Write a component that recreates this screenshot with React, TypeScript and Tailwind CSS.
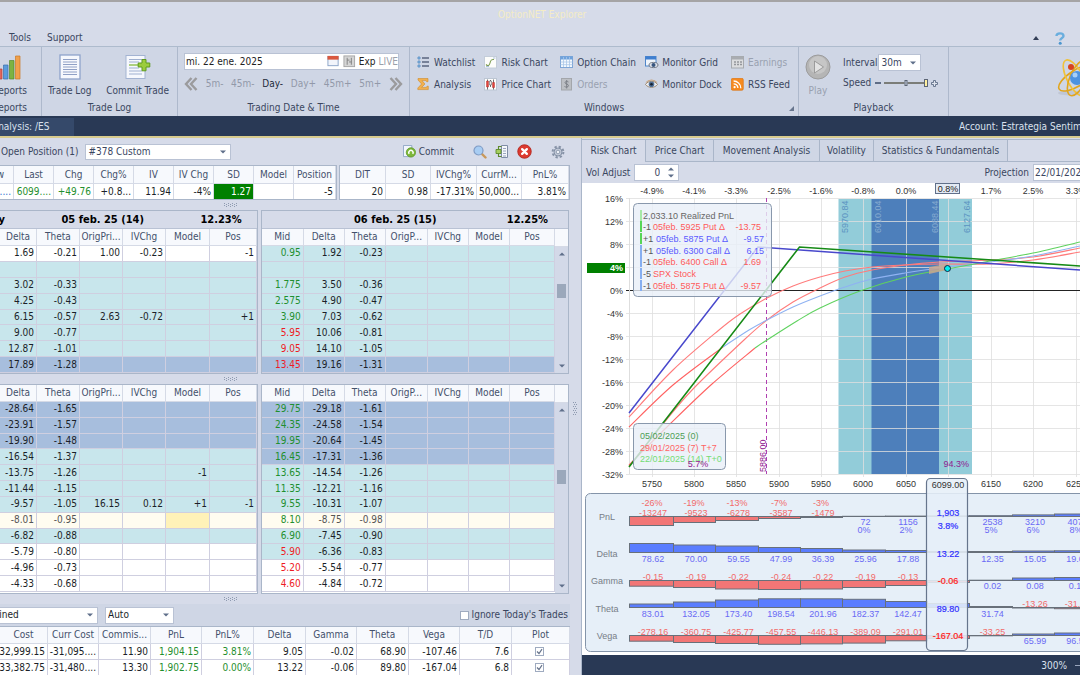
import React, { useState } from "react";

type Row = string[];

interface Column {
  label: string;
  width: number;
}

const cols = (spec: string): Column[] =>
  spec.split("|").map((part) => {
    const [label, width] = part.split(":");
    return { label, width: Number(width) };
  });

const rows = (text: string): Row[] => text.split("\n").map((line) => line.split("|"));

const quoteCols = cols("Low:14|Last:40|Chg:40|Chg%:40|IV:40|IV Chg:40|SD:40|Model:40|Position:42");
const tradeCols = cols("DIT:46|SD:45|IVChg%:46|CurrM...:45|PnL%:47");
const frontCols = cols("Delta:37|Theta:43|OrigPri...:43|IVChg:43|Model:44|Pos:47");
const backCols = cols("Mid:42|Delta:41|Theta:41|OrigP...:42|IVChg:41|Model:41|Pos:45");
const costCols = cols("Cost:48|Curr Cost:51|Commis...:52|PnL:51|PnL%:52|Delta:52|Gamma:51|Theta:52|Vega:51|T/D:52|Plot:58");

const frontCalls = rows("1.69|-0.21|1.00|-0.23||-1\n|||||\n3.02|-0.33||||\n4.25|-0.43||||\n6.15|-0.57|2.63|-0.72||+1\n9.00|-0.77||||\n12.87|-1.01||||\n17.89|-1.28||||");
const backCalls = rows("0.95|1.92|-0.23||||\n||||||\n1.775|3.50|-0.36||||\n2.575|4.90|-0.47||||\n3.90|7.03|-0.62||||\n5.95|10.06|-0.81||||\n9.05|14.10|-1.05||||\n13.45|19.16|-1.31||||");
const frontPuts = rows("-28.64|-1.65||||\n-23.91|-1.57||||\n-19.90|-1.48||||\n-16.54|-1.37||||\n-13.75|-1.26|||-1|\n-11.44|-1.15||||\n-9.57|-1.05|16.15|0.12|+1|-1\n-8.01|-0.95||||\n-6.82|-0.88||||\n-5.79|-0.80||||\n-4.96|-0.73||||\n-4.33|-0.68||||");
const backPuts = rows("29.75|-29.18|-1.61||||\n24.35|-24.58|-1.54||||\n19.95|-20.64|-1.45||||\n16.45|-17.31|-1.36||||\n13.65|-14.54|-1.26||||\n11.35|-12.21|-1.16||||\n9.55|-10.31|-1.07||||\n8.10|-8.75|-0.98||||\n6.90|-7.45|-0.90||||\n5.90|-6.36|-0.83||||\n5.20|-5.54|-0.77||||\n4.60|-4.84|-0.72||||");
const costs = rows("-32,999.15|-31,095....|11.90|1,904.15|3.81%|9.05|-0.02|68.90|-107.46|7.6\n-33,382.75|-31,480....|13.30|1,902.75|0.00%|13.22|-0.06|89.80|-167.04|6.8");

// w = white, c = within two deviations, b = within one, y = focused row
const toneClass: Record<string, string> = {
  w: "bg-white",
  c: "bg-[#c8e6ec]",
  b: "bg-[#a7bedd]",
  y: "bg-[#fffcf0] text-[#555]",
};

const headCell = "overflow-hidden whitespace-nowrap border-r border-b border-[#d5dae6] p-0 text-center font-normal text-[#43506b]";
const bodyCell = "overflow-hidden whitespace-nowrap border-r border-b border-[#cfcfe0] p-0 pr-[2px] text-right leading-[14px]";

function Cols({ columns }: { columns: Column[] }) {
  return (
    <colgroup>
      {columns.map((c, i) => (
        <col key={i} style={{ width: c.width }} />
      ))}
    </colgroup>
  );
}

interface ChainProps {
  columns: Column[];
  data: Row[];
  tones: string;
  redFrom?: number;
  height: string;
  focus?: boolean;
}

function ChainTable({ columns, data, tones, redFrom, height, focus }: ChainProps) {
  return (
    <table className={`w-full table-fixed border-separate border-spacing-0 ${height}`}>
      <Cols columns={columns} />
      <thead className="bg-[#f7f9fd]">
        <tr className="h-[17px]">
          {columns.map((c) => (
            <th key={c.label} className={headCell}>{c.label}</th>
          ))}
        </tr>
      </thead>
      <tbody>
        {data.map((row, r) => (
          <tr key={r} className={`h-[15px] ${toneClass[tones[r]]}`}>
            {row.map((cell, i) => {
              let color = "";
              if (redFrom !== undefined && i === 0) color = r >= redFrom ? "text-[#ee1c25]" : "text-[#1f8f2e]";
              if (focus && tones[r] === "y" && i === 4) color = "bg-[#fff2b8]";
              return (
                <td key={i} className={`${bodyCell} ${color}`}>{cell}</td>
              );
            })}
          </tr>
        ))}
      </tbody>
    </table>
  );
}

function ScrollBar({ thumb }: { thumb: string }) {
  return (
    <div className="flex w-[13px] shrink-0 flex-col bg-[#d3d9e8]">
      <div className="h-[18px] border-b border-[#d5dae6] bg-[#f7f9fd]" />
      <div className="flex flex-1 flex-col items-center py-[5px]">
        <Caret up />
        <div className={`h-[14px] w-[9px] bg-[#9ba8bb] ${thumb}`} />
        <div className="mt-auto">
          <Caret />
        </div>
      </div>
    </div>
  );
}

function Caret({ up = false }: { up?: boolean }) {
  return (
    <svg width="6" height="4" viewBox="0 0 6 4" className="block">
      <path d={up ? "M0 3.5 3 .5 6 3.5z" : "M0 .5h6L3 3.5z"} fill="#5f6f8a" />
    </svg>
  );
}

function Grip({ vertical = false }: { vertical?: boolean }) {
  return (
    <svg width={vertical ? 5 : 13} height={vertical ? 13 : 5} className="block">
      {[0, 2, 4, 6, 8, 10, 12].map((a) =>
        [0, 1].map((k) => {
          const b = k * 2 + (a % 4 ? 1 : 0);
          return <rect key={`${a}-${k}`} x={vertical ? b : a} y={vertical ? a : b} width="1" height="1" fill="#8e9ab0" />;
        })
      )}
    </svg>
  );
}

function HSplitter() {
  return (
    <div className="flex h-[10px] items-center pl-[224px]">
      <Grip />
    </div>
  );
}

interface PickerProps {
  label: string;
  value: string;
  className: string;
}

function Picker({ label, value, className }: PickerProps) {
  return (
    <div className={`relative flex items-center border border-[#b9c2d4] bg-white ${className}`}>
      <select aria-label={label} defaultValue={value} className="h-full w-full appearance-none bg-transparent pl-[2px] outline-none">
        <option>{value}</option>
      </select>
      <span className="pointer-events-none absolute right-[4px]">
        <Caret />
      </span>
    </div>
  );
}

/* ---------- icons ---------- */

const iconArt: Record<string, React.ReactNode> = {
  watch: (
    <>
      {[2, 6, 10].map((y) => (
        <g key={y}>
          <circle cx="2" cy={y} r="1.3" fill="#7fb2e0" stroke="#4a7fb5" strokeWidth=".5" />
          <path d={`M5 ${y}h7`} stroke="#3c4963" strokeWidth="1.2" />
        </g>
      ))}
    </>
  ),
  sigma: <path d="M1 .5h10v3.2H9.6L9 2.6H5L8 6l-3.3 3.4H9.4l.6-1.2h1.3v3.4H.8V10L4.6 6 1 2z" fill="#f2b04e" stroke="#cf8b2b" strokeWidth=".6" />,
  risk: (
    <>
      <rect x=".5" y=".5" width="12" height="11.5" fill="#fdfdfb" stroke="#c4cdd9" />
      <path d="M2 8.5c2 2 3.5 1 4-1.5S7 3 10 3.5" fill="none" stroke="#7d9c52" strokeWidth="1.1" />
      <path d="M9 2h2.5M2 10.5h3" stroke="#a9bfdc" />
    </>
  ),
  price: (
    <>
      <rect x=".5" y=".5" width="12" height="11.5" fill="#fdfdfd" stroke="#bcc6d3" />
      <path d="M3.5 1.5v10M6.5 2v7M9.5 1.5v10" stroke="#333" strokeWidth=".7" />
      <path d="M2.5 3h2v6h-2zM8.5 4.5h2v5h-2z" fill="#e2453c" stroke="#a22" strokeWidth=".4" />
      <path d="M5.6 3h1.8v4H5.6z" fill="#fff" stroke="#333" strokeWidth=".5" />
    </>
  ),
  chain: (
    <>
      <rect x=".5" y=".5" width="12" height="11" fill="#f4f9fe" stroke="#7fa6d6" />
      <path d="M.5.5h12v3H.5z" fill="#6fa2dc" />
      <path d="M.5 6h12M.5 8.7h12M3.5 1v10M6.5 1v10M9.5 1v10" stroke="#a9c6e8" strokeWidth=".8" />
    </>
  ),
  orders: (
    <>
      <rect x="1.5" y=".5" width="10" height="11.5" fill="#bcbfc4" stroke="#a3a6ab" />
      <path d="M8.5 4C7.5 3 4.8 3.2 5 4.8s3.5 1 3.5 2.8S5.5 9.3 4.5 8.5M6.7 2v8.5" fill="none" stroke="#7d8188" />
    </>
  ),
  grid: (
    <>
      <rect x=".5" y=".5" width="10.5" height="9.5" fill="#eef4fb" stroke="#4f86c9" />
      <path d="M.5.5H11v3H.5z" fill="#3f7fd0" />
      <ellipse cx="8.5" cy="9" rx="4.5" ry="2.6" fill="#dfe3ea" stroke="#5a6270" strokeWidth=".8" />
      <circle cx="8.5" cy="9" r="2" fill="#38567f" />
    </>
  ),
  dock: (
    <>
      <path d="M.5 6.5C3 2.5 9.5 2 12.5 6.5 9.5 10.3 3.5 10.3.5 6.5z" fill="#eef0f4" stroke="#8b7355" strokeWidth=".8" />
      <path d="M1 4.5C4 1.2 9 1.2 12 4.5" fill="none" stroke="#c8a37b" strokeWidth="1.1" />
      <circle cx="6.5" cy="6.2" r="2.8" fill="#4f6f96" />
      <circle cx="6.5" cy="6.2" r="1.3" fill="#16202e" />
    </>
  ),
  earn: (
    <>
      <rect x=".5" y=".5" width="12" height="11.5" fill="#dcdddf" stroke="#a6a9ae" />
      <path d="M.5.5h12v3H.5z" fill="#a9acb1" />
      <path d="M3 6h2m1 0h2m1 0h2M3 8.5h2m1 0h2m1 0h2" stroke="#94979c" strokeWidth="1.3" />
    </>
  ),
  rss: (
    <>
      <rect x=".3" y=".3" width="12" height="12" rx="1.5" fill="#f68a1f" stroke="#d96f0a" strokeWidth=".6" />
      <circle cx="3.6" cy="9.2" r="1.1" fill="#fff" />
      <path d="M2.6 5.8a4.3 4.3 0 0 1 4.3 4.3M2.6 3a7.2 7.2 0 0 1 7.2 7.2" fill="none" stroke="#fff" strokeWidth="1.3" />
    </>
  ),
  calendar: (
    <>
      <rect x="1" y="1.5" width="11" height="10" fill="#f2f5fb" stroke="#8aa3c7" />
      <path d="M.5 1h12v4H.5z" fill="#d9583f" />
    </>
  ),
  levels: (
    <>
      <rect x="1" y="1" width="11.5" height="11.5" fill="#d5d5d5" stroke="#a5a5a5" />
      <path d="M4.5 3v7.5M9 3v7.5M4.5 5.5H7M6.5 7.5H9" stroke="#777" strokeWidth=".9" />
    </>
  ),
  commit: (
    <>
      <path d="M.5.5h9v12h-9z" fill="#f2f6fc" stroke="#8ea4c4" />
      <circle cx="8.5" cy="8" r="5" fill="#7db83a" stroke="#5a9423" strokeWidth=".8" />
      <path d="M6.8 9.5a2.3 2.3 0 1 1 3.5 0" fill="none" stroke="#fff" strokeWidth="1.5" />
    </>
  ),
  search: (
    <>
      <path d="M8.5 8.5l4 4" stroke="#c9985a" strokeWidth="2.4" strokeLinecap="round" />
      <circle cx="5.5" cy="5.5" r="4.5" fill="#a8cdf3" stroke="#7f9bc4" strokeWidth="1.2" />
    </>
  ),
  book: (
    <>
      <path d="M6.5.5h6v12h-6z" fill="#f5f7fb" stroke="#7f8da6" />
      <path d="M8 3.5h3M8 6h3M8 8.5h3M8 11h3" stroke="#9aa7bd" />
      <path d="M6.5 1.5h-3v10h3" fill="none" stroke="#5d8a2b" strokeWidth="1.1" />
      <path d="M1 4.5h5v4H1z" fill="#a6cf5f" stroke="#5d8a2b" strokeWidth=".9" />
    </>
  ),
  close: (
    <>
      <circle cx="7" cy="7" r="6.3" fill="#dc3a30" stroke="#b3241b" strokeWidth=".8" />
      <path d="M4.8 4.8l4.4 4.4M9.2 4.8 4.8 9.2" stroke="#fff" strokeWidth="2.2" strokeLinecap="round" />
    </>
  ),
  gear: (
    <>
      <circle cx="7" cy="7" r="5.4" fill="none" stroke="#8692a6" strokeWidth="2" strokeDasharray="2.3 1.94" />
      <circle cx="7" cy="7" r="4" fill="#c3cad8" stroke="#8390a5" />
      <circle cx="7" cy="7" r="1.8" fill="#eef1f7" stroke="#8390a5" strokeWidth=".8" />
    </>
  ),
};

function Icon({ name, className = "size-[13px]" }: { name: string; className?: string }) {
  return (
    <svg viewBox="0 0 14 14" className={`shrink-0 ${className}`} aria-hidden="true">
      {iconArt[name]}
    </svg>
  );
}

/* ---------- ribbon ---------- */

function Group({ title, className, children }: { title: string; className: string; children: React.ReactNode }) {
  return (
    <section className={`flex shrink-0 flex-col border-r border-[#aeb9cc] ${className}`}>
      <div className="flex-1">{children}</div>
      <h2 className="h-[16px] text-center leading-[16px]">{title}</h2>
    </section>
  );
}

const windowItems: [string, string, boolean][][] = [
  [["watch", "Watchlist", true], ["sigma", "Analysis", true]],
  [["risk", "Risk Chart", true], ["price", "Price Chart", true]],
  [["chain", "Option Chain", true], ["orders", "Orders", false]],
  [["grid", "Monitor Grid", true], ["dock", "Monitor Dock", true]],
  [["earn", "Earnings", false], ["rss", "RSS Feed", true]],
];

function Chevrons({ flip = false }: { flip?: boolean }) {
  return (
    <svg width="14" height="14" viewBox="0 0 14 14" className={flip ? "rotate-180" : ""}>
      <path d="M7.5 1 2 7l5.5 6M12.5 1 7 7l5.5 6" fill="none" stroke="#9b9b9d" strokeWidth="2.4" />
    </svg>
  );
}

function Ribbon() {
  return (
    <div className="flex h-[70px] overflow-hidden border-t border-[#aebbcd] bg-[#cfd6e5] text-[#3a465f]">
      <section className="flex w-[42px] shrink-0 flex-col items-end overflow-hidden border-r border-[#aeb9cc] pr-[14px]">
        <button className="flex flex-1 flex-col items-end pt-[7px]">
          <svg width="26" height="26" viewBox="0 0 26 26" className="mr-[6px]">
            <path d="M2 15h5v10H2z" fill="#e2665c" stroke="#b0413a" strokeWidth=".7" />
            <path d="M8.5 11H13v14H8.5z" fill="#5b9bdc" stroke="#3a70ab" strokeWidth=".7" />
            <path d="M14.5 6.5H19V25h-4.5z" fill="#7cb342" stroke="#558b2f" strokeWidth=".7" />
            <path d="M20.5 2H25v23h-4.500z" fill="#f0a04b" stroke="#c87a26" strokeWidth=".7" />
          </svg>
          <span className="mt-[4px] leading-[14px]">Reports</span>
        </button>
        <h2 className="h-[16px] leading-[16px]">Reports</h2>
      </section>

      <Group title="Trade Log" className="w-[136px]">
        <div className="flex justify-between pt-[7px] pr-[8px] pl-[6px]">
          <button className="flex flex-col items-center">
            <svg width="22" height="26" viewBox="0 0 22 26">
              <rect x="1" y="1" width="20" height="24" fill="#f6f8fd" stroke="#8fa3cb" strokeWidth="1.3" />
              <path d="M4 5.5h14M4 8h14M4 10.5h14M4 13h14M4 15.5h14M4 18h14M4 20.5h14" stroke="#8fa0c6" />
            </svg>
            <span className="mt-[4px] leading-[14px]">Trade Log</span>
          </button>
          <button className="flex flex-col items-center">
            <svg width="26" height="26" viewBox="0 0 26 26">
              <rect x="1" y="1.5" width="19" height="23" fill="#f6f8fd" stroke="#a3b3d2" />
              <path d="M4 5.5h13M4 8h10M4 14h10M4 17h13M4 20h13" stroke="#9fb0d0" />
              <path d="M4 11h12" stroke="#7cb52c" strokeWidth="1.2" />
              <path d="M17 5.5h4V9h3.8v4H21v3.8h-4V13h-3.8V9H17z" fill="#9ccc3c" stroke="#5f9a1f" />
            </svg>
            <span className="mt-[4px] leading-[14px]">Commit Trade</span>
          </button>
        </div>
      </Group>

      <Group title="Trading Date & Time" className="w-[232px]">
        <div className="mt-[6px] mr-[10px] ml-[6px] flex h-[17px] items-center gap-[3px] border border-[#b9c2d4] bg-white pl-[1px]">
          <input aria-label="Trading date" defaultValue="mi. 22 ene. 2025" className="min-w-0 flex-1 text-[#222] outline-none" />
          <Icon name="calendar" />
          <Icon name="levels" />
          <span className="text-[#222]">Exp</span>
          <span className="text-[#9aa0aa]">LIVE</span>
        </div>
        <div className="mx-[6px] mt-[7px] flex items-center justify-between text-[#9299a9]">
          <button aria-label="Back"><Chevrons /></button>
          <button>5m-</button>
          <button>45m-</button>
          <button className="text-[#222a3a]">Day-</button>
          <button>Day+</button>
          <button>45m+</button>
          <button>5m+</button>
          <button aria-label="Forward"><Chevrons flip /></button>
        </div>
      </Group>

      <Group title="Windows" className="relative w-[389px]">
        <div className="flex justify-between pt-[7px] pr-[8px] pl-[7px]">
          {windowItems.map((pair, i) => (
            <div key={i} className="flex flex-col gap-[4px]">
              {pair.map(([icon, text, on]) => (
                <button key={text} disabled={!on} className={`flex h-[18px] items-center gap-[3px] ${on ? "" : "text-[#99a1b0]"}`}>
                  <Icon name={icon} className="size-[14px]" />
                  {text}
                </button>
              ))}
            </div>
          ))}
        </div>
        <svg width="5" height="5" className="absolute right-[4px] bottom-[5px]"><path d="M5 0v5H0z" fill="#67758d" /></svg>
      </Group>

      <Group title="Playback" className="w-[150px]">
        <div className="flex pt-[7px] pl-[6px]">
          <button disabled className="flex flex-col items-center text-[#99a1b0]">
            <svg width="26" height="26" viewBox="0 0 26 26">
              <circle cx="13" cy="13" r="12" fill="#b5b5b5" stroke="#9c9c9c" />
              <circle cx="13" cy="11" r="9" fill="#c6c6c6" />
              <path d="M9.5 7v12l9-6z" fill="#e3e3e3" stroke="#8d8d8d" strokeWidth=".8" />
            </svg>
            <span className="mt-[4px] leading-[14px]">Play</span>
          </button>
          <div className="flex flex-col gap-[5px] pl-[12px]">
            <div className="flex items-center">
              <span>Interval</span>
              <Picker label="Interval" value="30m" className="ml-[1px] h-[17px] w-[43px]" />
            </div>
            <label className="flex items-center gap-[3px]">
              Speed
              <span className="ml-[1px] h-[2px] w-[6px] bg-[#5f6d86]" />
              <span className="relative flex items-center">
                <input
                  type="range"
                  defaultValue={100}
                  className="h-[8px] w-[44px] appearance-none bg-[linear-gradient(#7b7d78,#7b7d78)] bg-[length:100%_2px] bg-center bg-no-repeat [&::-webkit-slider-thumb]:h-[8px] [&::-webkit-slider-thumb]:w-[4px] [&::-webkit-slider-thumb]:appearance-none [&::-webkit-slider-thumb]:border [&::-webkit-slider-thumb]:border-[#5d6675] [&::-webkit-slider-thumb]:bg-[#fff0a0]"
                />
                <span className="pointer-events-none absolute left-1/2 h-[6px] w-[3px] -translate-x-1/2 border border-[#5d6675] bg-[#cfd6e5]" />
              </span>
              <svg width="7" height="7"><path d="M2.5.5h2v2h2v2h-2v2h-2v-2h-2v-2h2z" fill="#dfe4ee" stroke="#5f6d86" strokeWidth=".9" /></svg>
            </label>
          </div>
        </div>
      </Group>

      <div className="flex flex-1 items-start justify-end overflow-hidden pt-[9px]">
        <svg width="26" height="46" viewBox="0 0 26 46">
          <ellipse cx="18" cy="37" rx="14" ry="2.5" fill="#b9c0cf" opacity=".7" />
          <g fill="none" stroke="#e2a51c" strokeWidth="1.6">
            <ellipse cx="23" cy="22" rx="21" ry="8" transform="rotate(-32 23 22)" />
            <ellipse cx="21" cy="22" rx="8" ry="20" transform="rotate(-28 21 22)" stroke="#f0c23a" />
            <ellipse cx="24" cy="22" rx="8" ry="19" transform="rotate(24 24 22)" />
          </g>
          <circle cx="23" cy="22" r="7" fill="#4d93e0" />
          <circle cx="21" cy="19" r="2.5" fill="#a8d0f7" />
          <circle cx="17" cy="11" r="3" fill="#d8431e" />
        </svg>
      </div>
    </div>
  );
}

/* ---------- risk chart ---------- */

// Catmull-Rom spline through the given points
function smooth(points: number[][]): string {
  let d = `M${points[0][0]} ${points[0][1]}`;
  for (let i = 0; i < points.length - 1; i++) {
    const p0 = points[i - 1] || points[i];
    const p1 = points[i];
    const p2 = points[i + 1];
    const p3 = points[i + 2] || p2;
    d += `C${p1[0] + (p2[0] - p0[0]) / 6} ${p1[1] + (p2[1] - p0[1]) / 6} ${p2[0] - (p3[0] - p1[0]) / 6} ${p2[1] - (p3[1] - p1[1]) / 6} ${p2[0]} ${p2[1]}`;
  }
  return d;
}

const priceTicks: [number, string, string][] = [
  [652, "-4.9%", "5750"],
  [694, "-4.1%", "5800"],
  [736, "-3.3%", "5850"],
  [779, "-2.5%", "5900"],
  [821, "-1.6%", "5950"],
  [863, "-0.8%", "6000"],
  [906, "0.0%", "6050"],
  [948, "", ""],
  [991, "1.7%", "6150"],
  [1033, "2.5%", "6200"],
  [1076, "3.3%", "6250"],
];

const legs: [string, string, string, string, string, number][] = [
  ["", "2,033.10 Realized PnL", "", "#666", "#a6e8a6", 219],
  ["-1", "05feb. 5925 Put Δ", "-13.75", "#ff5a5a", "#56d656", 230],
  ["+1", "05feb. 5875 Put Δ", "-9.57", "#5a5aff", "#56d656", 242],
  ["+1", "05feb. 6300 Call Δ", "6.15", "#5a5aff", "#86aef0", 254],
  ["-1", "05feb. 6400 Call Δ", "1.69", "#ff5a5a", "#86aef0", 265],
  ["-5", "SPX Stock", "", "#ff5a5a", "#86aef0", 277],
  ["-1", "05feb. 5875 Put Δ", "-9.57", "#ff5a5a", "#86aef0", 289],
];

const edges = [629, 673, 715, 758, 800, 842, 885, 927, 969, 1012, 1054, 1097];

interface Greek {
  name: string;
  label: number;
  base: number;
  bars: number[];
  values: string[];
  neg: number;
  pos: number;
}

const greeks: Greek[] = [
  { name: "PnL", label: 520, base: 516.5, bars: [-9, -6, -4, -2, -1, 0.2, 0.4, 0.6, 0.8, 1.6, 2.5], values: ["-13247", "-9523", "-6278", "-3587", "-1479", "72", "1156", "", "2538", "3210", "4075"], neg: 516, pos: 525 },
  { name: "Delta", label: 557, base: 552.5, bars: [9, 7.5, 6.5, 5, 4, 2.5, 2, 1, 1, 1.5, 1.7], values: ["78.62", "70.00", "59.55", "47.99", "36.39", "25.96", "17.88", "", "12.35", "15.05", "19.65"], neg: 549, pos: 562 },
  { name: "Gamma", label: 584, base: 580.5, bars: [-5.7, -7, -8.5, -9, -8.5, -7, -5, -2, 0.3, 2.5, 3], values: ["-0.15", "-0.19", "-0.22", "-0.24", "-0.22", "-0.19", "-0.13", "", "0.02", "0.08", "0.12"], neg: 580, pos: 589 },
  { name: "Theta", label: 612, base: 607.5, bars: [3.5, 5.5, 7.5, 8.7, 8.7, 8.2, 6, 4, 1, -0.5, -1.2], values: ["83.01", "132.05", "173.40", "198.54", "201.96", "182.37", "142.47", "", "31.74", "-13.26", "-31.08"], neg: 607, pos: 617 },
  { name: "Vega", label: 639, base: 635.5, bars: [-5.7, -7, -8, -8.8, -8.4, -7.6, -5.3, -3, -0.3, 1.5, 2.5], values: ["-278.16", "-360.75", "-425.77", "-457.55", "-446.13", "-389.09", "-291.01", "", "-33.25", "65.99", "96.55"], neg: 635, pos: 644 },
];

const pnlPct: [number, string, number][] = [
  [652, "-26%", 506], [694, "-19%", 506], [737, "-13%", 506], [779, "-7%", 506], [821, "-3%", 506],
  [864, "0%", 533], [906, "2%", 533], [991, "5%", 533], [1033, "6%", 533], [1076, "8%", 533],
];

const current: [string, number][] = [["1,903", 516], ["3.8%", 529], ["13.22", 557], ["-0.06", 584], ["89.80", 612], ["-167.04", 639]];

const RED = "#f27676";
const BLUE = "#5a7dff";

function RiskChart() {
  return (
    <svg viewBox="582 183 498 472" className="block h-auto w-full bg-white font-['Liberation_Sans',Arial,sans-serif] text-[9px]" role="img" aria-label="Risk chart">
      {/* deviation bands */}
      <rect x="838.5" y="199" width="133.5" height="275" fill="#92ccd9" />
      <rect x="871.5" y="199" width="67.5" height="275" fill="#4d7fbb" />

      {/* grid */}
      {priceTicks.map(([x, pct, price]) => (
        <g key={x}>
          <path d={`M${x + 0.5} 198v279`} stroke="#dedede" strokeOpacity=".8" />
          <text x={x} y="194" textAnchor="middle" fill="#333">{pct}</text>
          <text x={x} y="487" textAnchor="middle" fill="#333">{price}</text>
        </g>
      ))}
      {[16, 12, 8, 4, 0, -4, -8, -12, -16, -20, -24, -28, -32].map((v, i) => (
        <g key={v}>
          <path d={`M626 ${198.5 + i * 23}H1080`} stroke={v === 0 ? "#222" : "#dedede"} strokeOpacity={v === 0 ? 1 : 0.8} />
          {v !== 4 && <text x="623" y={202 + i * 23} textAnchor="end" fill="#333">{v}%</text>}
        </g>
      ))}
      <path d="M629.5 198v276" stroke="#dedede" />
      <rect x="587" y="263" width="38" height="10" fill="#008000" />
      <text x="623" y="271" textAnchor="end" fill="#fff" fontWeight="bold">4%</text>

      <rect x="935.5" y="183.5" width="24" height="10" fill="#e3eaf4" stroke="#61708a" />
      <text x="948" y="192" textAnchor="middle" fill="#222">0.8%</text>

      {[[848, "5970.84"], [881, "6010.04"], [938, "6088.44"], [970, "6127.64"]].map(([x, t]) => (
        <text key={t} transform={`translate(${x} 233) rotate(-90)`} fill={x === 881 || x === 938 ? "#86abd0" : "#5b93c1"}>{t}</text>
      ))}

      {/* break-even marker */}
      <path d="M766.5 198v276" stroke="#b040b0" strokeDasharray="4 3" />
      <text transform="translate(766 472) rotate(-90)" fill="#902090">5886.00</text>
      <text x="969" y="467" textAnchor="end" fill="#902090">94.3%</text>

      {/* curves */}
      <g fill="none">
        <path d={smooth([[629, 417], [673, 370], [719, 330], [740, 314], [767, 298], [793, 286], [820, 277], [845, 271], [872, 267], [905, 265], [940, 264], [990, 264], [1033, 260], [1080, 252]])} stroke="#ff7b7b" strokeWidth="1.1" />
        <path d={smooth([[629, 466], [663, 424], [693, 389], [744, 340], [767, 320], [793, 302], [820, 288], [845, 277], [872, 270], [905, 265], [940, 262], [990, 260], [1033, 257], [1080, 248]])} stroke="#ff7b7b" strokeWidth="1.1" />
        <path d={smooth([[629, 427], [673, 385], [723, 347]])} stroke="#ff6262" strokeWidth="1.1" />
        <path d={smooth([[723, 347], [749, 330], [767, 320], [793, 307], [820, 296], [845, 287], [872, 279], [905, 273], [940, 268], [990, 262], [1033, 256], [1080, 246]])} stroke="#8fb2f2" strokeWidth="1.1" />
        <path d={smooth([[629, 465], [670, 424], [712, 384], [755, 348]])} stroke="#ff6262" strokeWidth="1.1" />
        <path d={smooth([[755, 348], [767, 340], [797, 321], [820, 308], [860, 291], [906, 277], [947, 269], [990, 261], [1033, 253], [1080, 242]])} stroke="#5fd25f" strokeWidth="1.1" />
        <path d="M629 413 758 247 1080 270" stroke="#4848cc" strokeWidth="1.5" />
        <path d="M629 467 663 423 799.5 247 1080 266" stroke="#168a16" strokeWidth="1.6" />
      </g>
      <path d="M929 267l18-3v6l-18 4z" fill="#c9a78f" opacity=".85" />
      <circle cx="947.5" cy="268.5" r="3" fill="#00f0f0" stroke="#124" />

      {/* position legend */}
      <rect x="633.5" y="203.5" width="138" height="93" rx="4" fill="#e8eff8" fillOpacity=".8" stroke="#8998ac" />
      {legs.map(([qty, text, value, color, bar, y], i) => (
        <g key={i}>
          <rect x="640" y={y - 9} width="2" height="11" fill={bar} />
          <text x="643" y={y} fill="#555">{qty}</text>
          <text x={qty ? (qty[0] === "+" ? 656 : 653) : 643} y={y} fill={color}>{text}</text>
          <text x={qty === "+1" ? 764 : 761} y={y} textAnchor="end" fill={color}>{value}</text>
        </g>
      ))}

      {/* date legend */}
      <rect x="633.5" y="423.5" width="92" height="46" rx="4" fill="#e8eff8" fillOpacity=".8" stroke="#8998ac" />
      <text x="640" y="439" fill="#4f9e55">05/02/2025 (0)</text>
      <text x="640" y="451" fill="#ff6464">29/01/2025 (7) T+7</text>
      <text x="640" y="462" fill="#74dc74">22/01/2025 (14) T+0</text>
      <text x="698" y="467" textAnchor="middle" fill="#902090">5.7%</text>

      {/* greeks by price */}
      <rect x="585.5" y="493.5" width="520" height="158" rx="5" fill="#e6eff8" stroke="#8494a9" />
      {greeks.map((g) => (
        <g key={g.name}>
          <text x="607" y={g.label} textAnchor="middle" fill="#777d87">{g.name}</text>
          {g.bars.map((h, i) => (
            <rect
              key={i}
              x={edges[i] + 0.5}
              y={h > 0 ? g.base - h : g.base}
              width={edges[i + 1] - edges[i]}
              height={Math.abs(h)}
              fill={h > 0 ? BLUE : RED}
              stroke="#68707a"
            />
          ))}
          {g.values.map((v, i) => (
            <text key={i} x={(edges[i] + edges[i + 1]) / 2 + 2} y={v[0] === "-" ? g.neg : g.pos} textAnchor="middle" fill={v[0] === "-" ? "#f26a6a" : "#6a6af5"}>{v}</text>
          ))}
        </g>
      ))}
      {pnlPct.map(([x, t, y]) => (
        <text key={x} x={x} y={y} textAnchor="middle" fill={t[0] === "-" ? "#f26a6a" : "#6a6af5"}>{t}</text>
      ))}

      {/* current price column */}
      <rect x="926.5" y="478.5" width="41" height="172" rx="4" fill="#e6eff8" fillOpacity=".88" stroke="#66758d" strokeWidth="1.2" />
      <text x="948" y="488" textAnchor="middle" fill="#333">6099.00</text>
      {current.map(([t, y]) => (
        <text key={t} x="948" y={y} textAnchor="middle" stroke={t[0] === "-" ? "#ff2020" : "#3030ff"} strokeWidth=".2" fill={t[0] === "-" ? "#ff2020" : "#3030ff"}>{t}</text>
      ))}
    </svg>
  );
}

/* ---------- panels ---------- */

function SummaryTable({ columns, cells, className }: { columns: Column[]; cells: [string, string?][]; className: string }) {
  return (
    <table className={`table-fixed border-separate border-spacing-0 border border-[#aab6c9] bg-white ${className}`}>
      <Cols columns={columns} />
      <thead className="bg-[#f7f9fd]">
        <tr className="h-[18px]">
          {columns.map((c) => (
            <th key={c.label} className={headCell}>
              <span className={`flex ${c.label === "Low" ? "justify-end pr-[9px]" : "justify-center"}`}>{c.label}</span>
            </th>
          ))}
        </tr>
      </thead>
      <tbody>
        <tr className="h-[15px]">
          {cells.map(([text, color = ""], i) => (
            <td key={i} className={`overflow-hidden whitespace-nowrap border-r border-[#d5dae6] p-0 pr-[2px] leading-[14px] ${color}`}>
              <span className="flex justify-end">{text}</span>
            </td>
          ))}
        </tr>
      </tbody>
    </table>
  );
}

function ExpiryTitle({ prefix, title, iv, className }: { prefix: string; title: string; iv: string; className: string }) {
  return (
    <h3 className={`flex h-[18px] items-center border-b border-[#b9c2d4] text-[11px] font-bold text-black ${className}`}>
      <span className="flex w-[5px] justify-end">{prefix}</span>
      <span className="flex-1 text-center">{title}</span>
      <span>{iv}</span>
    </h3>
  );
}

function AnalysisPanel() {
  return (
    <div className="flex min-w-0">
      <div className="min-w-0 flex-1">
        <div className="flex h-[27px] items-center text-[#3a465f]">
          <span className="pl-px">Open Position (1)</span>
          <Picker label="Open Position" value="#378 Custom" className="ml-[7px] h-[16px] w-[146px]" />
          <div className="ml-auto flex items-center pr-[5px]">
            <button className="flex items-center gap-[3px]">
              <Icon name="commit" />
              Commit
            </button>
            <button aria-label="Search" className="ml-[19px]"><Icon name="search" className="size-[14px]" /></button>
            <button aria-label="Book" className="ml-[8px]"><Icon name="book" className="size-[14px]" /></button>
            <button aria-label="Delete" className="ml-[8px]"><Icon name="close" className="size-[15px]" /></button>
            <button aria-label="Settings" className="ml-[19px]"><Icon name="gear" className="size-[14px]" /></button>
          </div>
        </div>

        <div className="flex gap-[2px] pr-[2px]">
          <SummaryTable
            columns={quoteCols}
            className="w-0 flex-[336] border-l-0"
            cells={[["6055....", "text-[#2c6fd0]"], ["6099....", "text-[#1f8f2e]"], ["+49.76", "text-[#1f8f2e]"], ["+0.8..."], ["11.94"], ["-4%"], ["1.27", "bg-[#008000] text-white"], [""], ["-5"]]}
          />
          <SummaryTable
            columns={tradeCols}
            className="w-0 flex-[230]"
            cells={[["20"], ["0.98"], ["-17.31%"], ["50,000..."], ["3.81%"]]}
          />
        </div>
        <HSplitter />

        <div className="flex gap-[3px] pr-px">
          <div className="w-0 flex-[258] overflow-hidden border border-l-0 border-[#aab6c9]">
            <ExpiryTitle prefix="Weekly" title="05 feb. 25 (14)" iv="12.23%" className="pr-[15px]" />
            <ChainTable columns={frontCols} data={frontCalls} tones="wccccccb" height="h-[144px]" />
          </div>
          <div className="w-0 flex-[308] border border-[#aab6c9]">
            <ExpiryTitle prefix="" title="06 feb. 25 (15)" iv="12.25%" className="pr-[20px] pl-[17px]" />
            <div className="flex">
              <ChainTable columns={backCols} data={backCalls} tones="cccccccb" redFrom={5} height="h-[144px]" />
              <ScrollBar thumb="mt-[28px]" />
            </div>
          </div>
        </div>
        <HSplitter />

        <div className="flex gap-[3px] pr-px">
          <div className="w-0 flex-[258] border border-l-0 border-[#aab6c9] bg-white pb-px">
            <ChainTable columns={frontCols} data={frontPuts} tones="bbbccccycwww" height="h-[207px]" focus />
          </div>
          <div className="flex w-0 flex-[308] border border-[#aab6c9] bg-white">
            <div className="min-w-0 flex-1 pb-px">
              <ChainTable columns={backCols} data={backPuts} tones="bbbbcccyccww" redFrom={9} height="h-[207px]" />
            </div>
            <ScrollBar thumb="mt-[58px]" />
          </div>
        </div>
        <HSplitter />

        <div className="flex h-[22px] items-center bg-[#cfd6e5]">
          <Picker label="Plan" value="Combined" className="-ml-[30px] h-[17px] w-[128px]" />
          <Picker label="Mode" value="Auto" className="ml-[7px] h-[17px] w-[69px]" />
          <label className="ml-auto flex items-center gap-[3px] pr-[2px] text-[#3a465f]">
            <input type="checkbox" className="size-[9px] appearance-none border border-[#9fabc0] bg-white" />
            Ignore Today's Trades
          </label>
        </div>

        <table className="w-full table-fixed border-separate border-spacing-0 border-t border-[#aab6c9] bg-white">
          <Cols columns={costCols} />
          <thead className="bg-[#f7f9fd]">
            <tr className="h-[17px]">
              {costCols.map((c) => (
                <th key={c.label} className={headCell}>{c.label}</th>
              ))}
            </tr>
          </thead>
          <tbody>
            {costs.map((row, r) => (
              <tr key={r} className="h-[16px]">
                {row.map((cell, i) => (
                  <td key={i} className={`${bodyCell} ${i === 3 || i === 4 ? "text-[#1f8f2e]" : ""}`}>
                    <span className="flex justify-end">{cell}</span>
                  </td>
                ))}
                <td className={bodyCell}>
                  <PlotBox />
                </td>
              </tr>
            ))}
          </tbody>
        </table>
      </div>
      <div className="flex w-[11px] shrink-0 justify-center pt-[264px]">
        <Grip vertical />
      </div>
    </div>
  );
}

function PlotBox() {
  return (
    <span className="relative flex h-[14px] items-center justify-center">
      <input type="checkbox" defaultChecked aria-label="Plot" className="size-[9px] appearance-none border border-[#9fabc0] bg-white" />
      <svg width="7" height="7" viewBox="0 0 7 7" className="pointer-events-none absolute">
        <path d="M1 3.5 3 5.5 6 1.2" fill="none" stroke="#66738a" strokeWidth="1.2" />
      </svg>
    </span>
  );
}

const tabs: [string, string][] = [
  ["Risk Chart", "w-[64px]"],
  ["Price Chart", "w-[68px]"],
  ["Movement Analysis", "w-[106px]"],
  ["Volatility", "w-[54px]"],
  ["Statistics & Fundamentals", "w-[134px]"],
];

function ChartPanel() {
  const [active, setActive] = useState("Risk Chart");
  return (
    <div className="flex min-w-0 flex-col overflow-hidden border-l border-[#aab6c9] text-[#3a465f]">
      <div className="mt-px flex h-[23px] border-t border-[#aab6c9]">
        {tabs.map(([name, width]) => (
          <button
            key={name}
            onClick={() => setActive(name)}
            className={`shrink-0 whitespace-nowrap border-r border-[#aab6c9] ${width} ${active === name ? "" : "border-b bg-[#cfd6e5]"}`}
          >
            {name}
          </button>
        ))}
        <div className="flex-1 border-b border-[#aab6c9]" />
      </div>
      <div className="flex h-[21px] items-center pl-[4px]">
        <label htmlFor="vol-adjust">Vol Adjust</label>
        <div className="ml-[4px] flex h-[17px] w-[45px] items-center border border-[#b9c2d4] bg-white pr-[4px]">
          <input id="vol-adjust" defaultValue="0" className="w-0 flex-1 pr-[8px] text-right outline-none" />
          <span className="flex flex-col gap-[3px]">
            <Caret up />
            <Caret />
          </span>
        </div>
        <label htmlFor="projection" className="ml-auto">Projection</label>
        <input id="projection" defaultValue="22/01/2025" className="ml-[4px] h-[17px] w-[47px] border border-r-0 border-[#b9c2d4] bg-white pl-[1px] outline-none" />
      </div>
      <RiskChart />
      <footer className="flex h-[20px] flex-auto items-center justify-end gap-[8px] bg-[#293955] text-[#dbe1ee]">
        <span>300%</span>
        <span className="h-px w-[5px] bg-[#9aa6bd]" />
      </footer>
    </div>
  );
}

export default function App() {
  return (
    <div className="flex min-h-screen flex-col overflow-hidden bg-[#d6dbe9] font-['DejaVu_Sans_Condensed','Noto_Sans',sans-serif] text-[10px] leading-[14px] text-[#1b1f28]">
      <header className="flex h-[46px] flex-col border-t-2 border-[#a5a4a5] text-[#3a465f]">
        <h1 className="pt-[6px] pl-[4px] text-center text-[#f4ecc6]">OptionNET Explorer</h1>
        <nav className="mt-auto flex items-center gap-[16px] pb-px pl-[9px]">
          <a href="#tools">Tools</a>
          <a href="#support">Support</a>
          <button aria-label="Collapse" className="ml-auto">
            <svg width="6" height="4"><path d="M0 4 3 0 6 4z" fill="#333f57" /></svg>
          </button>
          <button aria-label="Help" className="pr-[15px]">
            <svg width="10" height="13" viewBox="0 0 10 13">
              <path d="M1.5 4C1.5.5 8.5.5 8.5 4 8.5 6 5.2 6 5.2 8.5" fill="none" stroke="#6aaede" strokeWidth="2.4" />
              <circle cx="5.2" cy="11.3" r="1.5" fill="#4d96cf" />
            </svg>
          </button>
        </nav>
      </header>
      <Ribbon />
      <div className="flex h-[22px] items-stretch justify-between border-b-2 border-[#d8cb8d] bg-[#293955] pt-[2px] text-[#dbe1ee]">
        <div className="flex w-[74px] items-center overflow-hidden bg-[#35496a]">
          <span className="-ml-[8px]">Analysis: /ES</span>
        </div>
        <div className="flex w-[121px] items-center overflow-hidden whitespace-nowrap">Account: Estrategia Sentimiento</div>
      </div>
      <main className="grid flex-1 grid-cols-[581fr_499fr]">
        <AnalysisPanel />
        <ChartPanel />
      </main>
    </div>
  );
}
